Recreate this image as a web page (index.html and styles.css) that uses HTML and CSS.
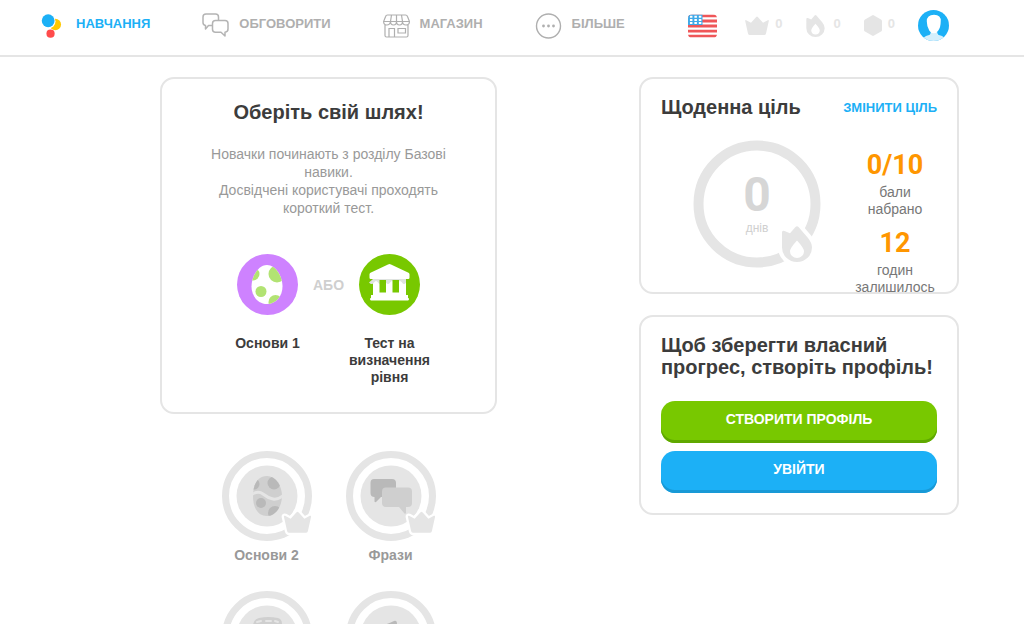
FILE: index.html
```
<!DOCTYPE html>
<html lang="uk">
<head>
<meta charset="utf-8">
<meta name="viewport" content="width=device-width, initial-scale=1">
<title>Навчання</title>
<link rel="stylesheet" href="styles.css">
</head>
<body>
<svg class="defs" aria-hidden="true">
  <symbol id="crown" viewBox="0 0 24 20" overflow="visible"><path d="M1.200 4.200 6 6.800 11.200 1q.8-.8 1.600 0L18 6.800l4.800-2.600q1.200-.4 1 .9L21 17.500q-.4 1.500-1.800 1.500H4.800Q3.400 19 3 17.500L.2 5.100q-.2-1.300 1-.9z"/></symbol>
</svg>
<header class="topbar">
  <nav class="nav">
    <a class="nav-item nav-active" href="#">
      <svg class="logo" viewBox="0 0 22 26"><circle cx="15" cy="11.500" r="6" fill="#ffc800"/><circle cx="7.500" cy="8" r="7.700" fill="#fff"/><circle cx="7.500" cy="7.500" r="6.700" fill="#1cb0f6"/><circle cx="10" cy="21" r="4.300" fill="#ff4b4b"/></svg>
      <span class="nav-label">Навчання</span>
    </a>
    <a class="nav-item" href="#">
      <svg class="nav-icon" viewBox="0 0 27 26" fill="none" stroke="#b4b4b4" stroke-width="1.500" stroke-linejoin="round"><path d="M10 12.500H6.500L3.500 16V12.500Q1 12 1 9.500V4Q1 1 4 1h9.500q3 0 3 3v3"/><path d="M13.500 7.500h9.500q3 0 3 3v5.500q0 3-3 3.200V23l-4-3.700h-5.500q-3 0-3-3v-5.800q0-3 3-3z"/></svg>
      <span class="nav-label">Обговорити</span>
    </a>
    <a class="nav-item" href="#">
      <svg class="nav-icon" viewBox="0 0 27 26" fill="none" stroke="#afafaf" stroke-width="1.200"><path d="M4.500 2h18q1.500 0 2 1.500l2 5H.6l2-5Q3 2 4.500 2zM.6 8.500q0 3.500 3.200 3.500T7.500 8.500q0 3.500 3 3.500t3-3.500q0 3.500 3 3.500t3-3.500q0 3.500 3.500 3.500t3.400-3.500M8.500 2l-1 6.500M13.500 2v6.500M18.500 2l1 6.500M2 11.500v11q0 1.500 1.500 1.500h20q1.500 0 1.500-1.500v-11M6 24v-8.500h5.500V24M15 15.500h7.500V20H15z"/></svg>
      <span class="nav-label">Магазин</span>
    </a>
    <a class="nav-item" href="#">
      <svg class="nav-icon" viewBox="0 0 27 26"><circle cx="13.500" cy="13" r="12" fill="none" stroke="#afafaf" stroke-width="1.400"/><g fill="#afafaf"><circle cx="8.500" cy="13" r="1.400"/><circle cx="13.500" cy="13" r="1.400"/><circle cx="18.500" cy="13" r="1.400"/></g></svg>
      <span class="nav-label">Більше</span>
    </a>
  </nav>
  <div class="status">
    <svg class="flag" viewBox="0 0 30 24" role="img" aria-label="Англійська"><clipPath id="fc"><rect width="30" height="24" rx="4"/></clipPath><g clip-path="url(#fc)"><path fill="#fff" d="M0 0h30v24H0z"/><path stroke="#ef5658" stroke-width="2.900" d="M0 1.500h30M0 6.800h30M0 12h30M0 17.200h30M0 22.500h30"/><path fill="#3fa9e8" d="M0 0h15v11H0z"/><path stroke="#fff" stroke-width="2" stroke-dasharray="2.600 2" d="M2 2.500h12M2 5.700h12M2 8.900h12"/></g></svg>
    <span class="stat"><svg class="stat-crown"><use href="#crown"/></svg><span class="nav-label">0</span></span>
    <span class="stat stat-wide"><svg class="stat-flame" viewBox="0 0 30 36"><path d="M13.500 1q1.500-1.600 3 0L26 12q4 5 4 9.500a15 14.500 0 0 1-30 0V6.500Q0 4 2.500 5L8 7.200z"/><path fill="#fff" d="M15 14.500q-7 7.500-7 11a7 6.500 0 0 0 14 0q0-3.500-7-11z"/></svg><span class="nav-label">0</span></span>
    <span class="stat"><svg class="stat-gem" viewBox="0 0 18 21"><path d="M8 .4q1-.6 2 0l7 4q1 .6 1 1.600v9q0 1-1 1.600l-7 4q-1 .6-2 0l-7-4q-1-.6-1-1.600V6q0-1 1-1.600z"/></svg><span class="nav-label">0</span></span>
    <svg class="avatar" viewBox="0 0 30 30" role="img" aria-label="Профіль"><clipPath id="ac"><circle cx="15" cy="15" r="15"/></clipPath><g clip-path="url(#ac)"><path fill="#1cb0f6" d="M0 0h30v30H0z"/><path fill="#d5effc" d="M4 30q1-4.500 6-5.500 2.500-.5 2.500-4h6q0 3.500 2.500 4 5 1 6 5.500z"/><path fill="#fff" d="M8.500 11q0-6.500 7-6.500t6.500 6.500q0 6-2.500 9-1.800 2.600-4.300 2.600T11 20q-2.500-3.500-2.500-9z"/></g></svg>
  </div>
</header>
<main class="page">
  <div class="tree">
    <section class="card path-card">
      <h1 class="title">Оберіть свій шлях!</h1>
      <p class="intro">Новачки починають з розділу Базові навики.<br>Досвідчені користувачі проходять короткий тест.</p>
      <div class="choices">
        <a class="choice" href="#">
          <svg class="choice-icon" viewBox="0 0 61 61"><circle cx="30.500" cy="30.500" r="30.500" fill="#ce82ff"/><clipPath id="egg"><path d="M30 11c9 0 15.500 12 15.500 21.500S39 50 30 50s-15.500-8-15.500-17.500S21 11 30 11z"/></clipPath><g clip-path="url(#egg)"><path fill="#fff" d="M10 8h40v44H10z"/><g fill="#b2e373"><circle cx="16" cy="20" r="6.500"/><circle cx="40" cy="20" r="8.500"/><circle cx="24" cy="37.500" r="5.500"/><circle cx="38.500" cy="48" r="7"/></g></g></svg>
          Основи 1
        </a>
        <span class="or">або</span>
        <a class="choice" href="#">
          <svg class="choice-icon" viewBox="0 0 61 61"><circle cx="30.500" cy="30.500" r="30.500" fill="#78c800"/><path fill="#fff" d="M14 25h33v17H14z"/><path fill="#dfe3df" d="M14 25h33v3.500q-2 3-4 0t-4 0-4 0-4 0-4 0-4 0-4 0-4 0-5 0z"/><path fill="#fff" d="M29 10.500q1.500-.8 3 0l17.500 8.300q1 .5 1 1.500v3.500q0 1.200-1.200 1.200H11.700q-1.200 0-1.200-1.200v-3.500q0-1 1-1.500zM12 41h37v3q1 0 1 1t-1 1.500H12q-1-.5-1-1.500t1-1z"/><path fill="#78c800" d="M20.500 26h6.500v12.500h-6.500zM33.500 26H40v12.500h-6.500z"/></svg>
          Тест на визначення рівня
        </a>
      </div>
    </section>
    <div class="skills">
      <a class="skill" href="#">
        <svg class="skill-icon" viewBox="0 0 90 90"><circle cx="45" cy="45" r="41.500" fill="none" stroke="#e5e5e5" stroke-width="7"/><circle cx="45" cy="45" r="30.500" fill="#e5e5e5"/><clipPath id="egg2"><path d="M45 25c9 0 15 10 15 20s-6 20-15 20-14-8-14-20 5-20 14-20z"/></clipPath><g clip-path="url(#egg2)"><path fill="#cfcfcf" d="M28 22h34v44H28z"/><g fill="#b9b9b9"><circle cx="32" cy="33" r="5.500"/><circle cx="52" cy="32" r="6.500"/><circle cx="39" cy="52" r="5"/><circle cx="53" cy="62" r="7"/></g><path fill="none" stroke="#e5e5e5" stroke-width="3" d="M29 44q7-5 12-1t10 5 11-4"/></g><use href="#crown" x="61" y="60" width="29" height="23" fill="#e5e5e5" stroke="#fff" stroke-width="4" paint-order="stroke"/></svg>
        Основи 2
      </a>
      <a class="skill" href="#">
        <svg class="skill-icon" viewBox="0 0 90 90"><circle cx="45" cy="45" r="41.500" fill="none" stroke="#e5e5e5" stroke-width="7"/><circle cx="45" cy="45" r="30.500" fill="#e5e5e5"/><path fill="#b9b9b9" d="M28 28h18q4 0 4 4v10q0 4-4 4H35l-5 5q-1 .5-1.500-.5V46q-4 0-4-4V32q0-4 3.500-4z"/><path fill="#cfcfcf" d="M40 36.500h22q4 0 4 4V52q0 4-4 4h-2v6q-.5 1-1.500.5L53 56H40q-4 0-4-4V40.500q0-4 4-4z"/><use href="#crown" x="61" y="60" width="29" height="23" fill="#e5e5e5" stroke="#fff" stroke-width="4" paint-order="stroke"/></svg>
        Фрази
      </a>
      <a class="skill" href="#" aria-label="Їжа">
        <svg class="skill-icon" viewBox="0 0 90 90"><circle cx="45" cy="45" r="41.500" fill="none" stroke="#e5e5e5" stroke-width="7"/><circle cx="45" cy="45" r="30.500" fill="#e5e5e5"/><path fill="#cfcfcf" d="M37 27q9-2 19 0 4 1 4 6l2 30H29l2-29q1-6 6-7z"/><path stroke="#e5e5e5" stroke-width="2" stroke-linecap="round" d="m35 31 4-1m5 0 5 0m4 0 3 1"/></svg>
      </a>
      <a class="skill" href="#" aria-label="Тварини">
        <svg class="skill-icon" viewBox="0 0 90 90"><circle cx="45" cy="45" r="41.500" fill="none" stroke="#e5e5e5" stroke-width="7"/><circle cx="45" cy="45" r="30.500" fill="#e5e5e5"/><path fill="#b9b9b9" d="M38 34q6-2 10-4 3-1 3 3v12H38z"/></svg>
      </a>
    </div>
  </div>
  <aside class="side">
    <section class="card goal">
      <div class="goal-head">
        <h2 class="title">Щоденна ціль</h2>
        <a class="change" href="#">Змінити ціль</a>
      </div>
      <div class="goal-body">
        <div class="streak">
          <svg class="streak-ring" viewBox="0 0 128 128"><circle cx="64" cy="64" r="58.500" fill="none" stroke="#e5e5e5" stroke-width="10"/><g transform="translate(89 86)"><path fill="#e5e5e5" stroke="#fff" stroke-width="8" paint-order="stroke" d="M13.500 1q1.500-1.600 3 0L26 12q4 5 4 9.500a15 14.500 0 0 1-30 0V6.500Q0 4 2.500 5L8 7.200z"/><path fill="#fff" d="M15 14.500q-7 7.500-7 11a7 6.500 0 0 0 14 0q0-3.500-7-11z"/></g></svg>
          <div class="streak-text"><span class="streak-count">0</span><span class="streak-unit">днів</span></div>
        </div>
        <div class="figures">
          <strong class="figure">0/10</strong>
          <span class="figure-label">бали набрано</span>
          <strong class="figure">12</strong>
          <span class="figure-label">годин залишилось</span>
        </div>
      </div>
    </section>
    <section class="card signup">
      <h2 class="title">Щоб зберегти власний прогрес, створіть профіль!</h2>
      <button class="button button-green" type="button">Створити профіль</button>
      <button class="button button-blue" type="button">Увійти</button>
    </section>
  </aside>
</main>
</body>
</html>
```

FILE: styles.css
```
* { box-sizing: border-box; }
body {
  margin: 0;
  height: 100vh;
  overflow: hidden;
  background: #fff;
  color: #3c3c3c;
  font-family: "Liberation Sans", Arial, sans-serif;
  font-size: 14px;
}
h1, h2, p { margin: 0; }
a { color: inherit; text-decoration: none; }
svg { display: block; flex: none; }
.defs { position: absolute; width: 0; height: 0; }

.topbar {
  display: flex;
  justify-content: space-between;
  align-items: center;
  height: 57px;
  padding: 0 75px 4px 41px;
  border-bottom: 2px solid #e5e5e5;
}
.nav { display: flex; gap: 52px; }
.nav-item {
  display: flex;
  align-items: center;
  gap: 10px;
  color: #afafaf;
  font-size: 13px;
  font-weight: bold;
  text-transform: uppercase;
}
.nav-active { gap: 14px; color: #1cb0f6; }
.nav-label { padding-bottom: 3px; line-height: 20px; }
.logo { width: 21px; height: 26px; }
.nav-icon { width: 27px; height: 26px; }
.status { display: flex; align-items: center; gap: 23px; }
.stat {
  display: flex;
  align-items: center;
  gap: 6px;
  color: #e5e5e5;
  fill: #e5e5e5;
  font-size: 13px;
  font-weight: bold;
}
.stat-wide { gap: 9px; }
.flag { width: 29px; height: 24px; margin-right: 5px; }
.stat-crown { width: 24px; height: 20px; }
.stat-flame { width: 19px; height: 22px; }
.stat-gem { width: 18px; height: 21px; }
.avatar { width: 31px; height: 31px; }

.page {
  display: grid;
  grid-template-columns: 337px minmax(0, 320px);
  justify-content: space-between;
  align-items: start;
  padding: 20px 65px 0 160px;
}
.card { border: 2px solid #e5e5e5; border-radius: 14px; }
.title { font-size: 20px; line-height: 22px; font-weight: bold; }

.path-card { padding: 22px 44px 26px; text-align: center; }
.intro { margin-top: 22px; color: #999; line-height: 18px; }
.choices {
  display: grid;
  grid-template-columns: 92px 30px 92px;
  justify-content: center;
  margin-top: 37px;
}
.choice {
  display: flex;
  flex-direction: column;
  align-items: center;
  gap: 20px;
  line-height: 17px;
  font-weight: bold;
}
.choice-icon { width: 61px; height: 61px; }
.or {
  justify-self: center;
  color: #cfcfcf;
  font-weight: bold;
  line-height: 62px;
  text-transform: uppercase;
}
.skills {
  display: grid;
  grid-template-columns: 90px 90px;
  justify-content: center;
  gap: 27px 34px;
  margin-top: 37px;
}
.skill {
  display: flex;
  flex-direction: column;
  align-items: center;
  gap: 6px;
  color: #999;
  font-weight: bold;
  line-height: 17px;
}
.skill-icon { width: 90px; height: 90px; overflow: visible; }

.side { display: grid; gap: 21px; }
.goal { padding: 17px 20px 0; }
.goal-head { display: flex; justify-content: space-between; align-items: center; }
.change { color: #1cb0f6; font-size: 13px; font-weight: bold; text-transform: uppercase; }
.goal-body { display: flex; justify-content: space-between; }
.streak { display: grid; width: 128px; margin: 22px 0 0 32px; }
.streak-ring, .streak-text { grid-area: 1 / 1; }
.streak-ring { width: 128px; height: 128px; }
.streak-text { display: flex; flex-direction: column; align-items: center; padding-top: 30px; }
.streak-count { color: #d6d6d6; font: bold 48px/50px Roboto, sans-serif; }
.streak-unit { color: #cfcfcf; font-size: 12px; line-height: 16px; }
.figures {
  display: flex;
  flex-direction: column;
  width: 84px;
  margin: 31px 0 -4px;
  text-align: center;
}
.figure { color: #ff9600; font: bold 27px/32px Roboto, sans-serif; }
.figure-label { margin: 3px 0 9px; color: #777; line-height: 17px; }
.figure-label:last-child { margin-bottom: 0; }

.signup { display: flex; flex-direction: column; padding: 17px 20px 20px; }
.button {
  height: 42px;
  padding: 0 0 6px;
  border: 0;
  border-radius: 14px;
  color: #fff;
  font: bold 14px/16px "Liberation Sans", Arial, sans-serif;
  text-transform: uppercase;
}
.button-green { margin-top: 23px; background: #78c800; box-shadow: inset 0 -3px #5fa800; }
.button-blue { margin-top: 8px; background: #1cb0f6; box-shadow: inset 0 -3px #1899d6; }
```
